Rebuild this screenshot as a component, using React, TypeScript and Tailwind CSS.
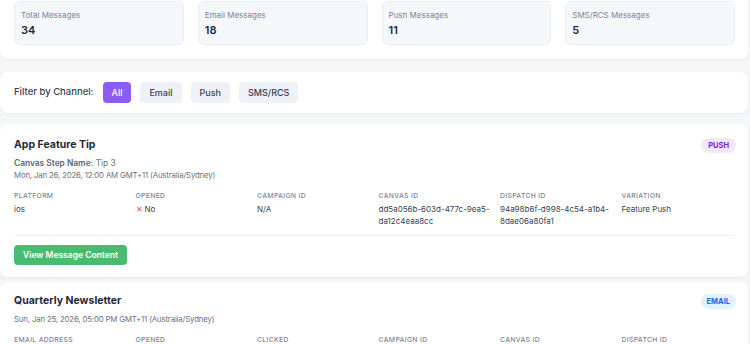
import React from "react";

const stats = [
  { label: "Total Messages", value: "34" },
  { label: "Email Messages", value: "18" },
  { label: "Push Messages", value: "11" },
  { label: "SMS/RCS Messages", value: "5" },
];

const filters = ["All", "Email", "Push", "SMS/RCS"];

function Field({ label, children }: { label: string; children?: React.ReactNode }) {
  return (
    <div className="min-w-0">
      <div className="text-[6.8px] leading-[12px] font-medium uppercase tracking-[0.05em] text-[#7b8497]">{label}</div>
      {children && <div className="mt-[1px] text-[8px] leading-[12px] text-[#374151]">{children}</div>}
    </div>
  );
}

export default function App() {
  return (
    <div
      className="bg-[#f5f6f8] pr-[2px] overflow-hidden h-[344px]"
      style={{ fontFamily: "Inter, 'Liberation Sans', sans-serif" }}
    >
      {/* Stats */}
      <div className="-mt-[13px] bg-white rounded-lg shadow-[0_1px_3px_rgba(0,0,0,0.05)] p-[14px] pr-[13px]">
        <div className="grid grid-cols-4 gap-[14px]">
          {stats.map((s) => (
            <div key={s.label} className="h-[44px] rounded-md bg-[#f5f8fb] border border-[#eaeef4] px-[6px] pt-[7px]">
              <div className="text-[8px] leading-[12px] text-[#7b8497]">{s.label}</div>
              <div className="text-[11px] leading-[16px] font-semibold text-[#1f2937] mt-[1px]">{s.value}</div>
            </div>
          ))}
        </div>
      </div>

      {/* Filter */}
      <div className="mt-[13px] bg-white rounded-lg shadow-[0_1px_3px_rgba(0,0,0,0.05)] px-[14px] py-[10px] flex items-center gap-[9px]">
        <span className="text-[9.5px] font-medium text-[#374151]">Filter by Channel:</span>
        <div className="flex items-center gap-[9px]">
          {filters.map((f, i) => (
            <button
              key={f}
              className={`h-[21px] rounded-[4px] px-[9px] text-[9px] font-medium ${
                i === 0 ? "bg-[#8b5cf6] text-white" : "bg-[#eef1f5] text-[#374151]"
              }`}
            >
              {f}
            </button>
          ))}
        </div>
      </div>

      {/* App Feature Tip */}
      <div className="mt-[11px] bg-white rounded-lg shadow-[0_1px_3px_rgba(0,0,0,0.05)] pl-[14px] pr-[12px] pt-[14px] pb-[12px]">
        <div className="flex items-start justify-between">
          <div>
            <h2 className="text-[10.5px] leading-[14px] font-bold text-[#1f2937]">App Feature Tip</h2>
            <div className="mt-[5px] text-[8.4px] leading-[12px] text-[#6b7280]">
              <span className="font-semibold text-[#5b6477]">Canvas Step Name:</span> Tip 3
            </div>
            <div className="text-[7.8px] leading-[12px] tracking-[-0.02em] text-[#6b7280]">
              Mon, Jan 26, 2026, 12:00 AM GMT+11 (Australia/Sydney)
            </div>
          </div>
          <span className="rounded-full bg-[#f3e8ff] px-[7px] h-[15px] flex items-center text-[7.5px] font-bold text-[#7e22ce]">PUSH</span>
        </div>
        <div className="mt-[9px] grid grid-cols-6 gap-x-2 pr-[1px]">
          <Field label="Platform">ios</Field>
          <Field label="Opened">
            <span className="text-[#ef4444] mr-[2px]">✕</span>No
          </Field>
          <Field label="Campaign ID">N/A</Field>
          <Field label="Canvas ID">dd5a056b-603d-477c-9ea5-da12c4eaa8cc</Field>
          <Field label="Dispatch ID">94a98b6f-d998-4c54-a1b4-8dae06a80fa1</Field>
          <Field label="Variation">Feature Push</Field>
        </div>
        <div className="mt-[8px] mr-[1px] border-t border-[#f0f2f5]" />
        <button className="mt-[9px] h-[20px] px-[9px] rounded-[4px] bg-[#48bb6f] text-white text-[8.5px] font-semibold">
          View Message Content
        </button>
      </div>

      {/* Quarterly Newsletter */}
      <div className="mt-[5px] bg-white rounded-lg shadow-[0_1px_3px_rgba(0,0,0,0.05)] pl-[14px] pr-[12px] pt-[12px] pb-[12px]">
        <div className="flex items-start justify-between">
          <div>
            <h2 className="text-[10.5px] leading-[14px] font-bold text-[#1f2937]">Quarterly Newsletter</h2>
            <div className="mt-[5px] text-[7.8px] leading-[12px] tracking-[-0.02em] text-[#6b7280]">
              Sun, Jan 25, 2026, 05:00 PM GMT+11 (Australia/Sydney)
            </div>
          </div>
          <span className="rounded-full bg-[#e0f2fe] px-[6px] h-[15px] flex items-center text-[7.5px] font-bold text-[#2563eb]">EMAIL</span>
        </div>
        <div className="mt-[9px] grid grid-cols-6 gap-x-2 pr-[1px]">
          <Field label="Email Address" />
          <Field label="Opened" />
          <Field label="Clicked" />
          <Field label="Campaign ID" />
          <Field label="Canvas ID" />
          <Field label="Dispatch ID" />
        </div>
      </div>
    </div>
  );
}
